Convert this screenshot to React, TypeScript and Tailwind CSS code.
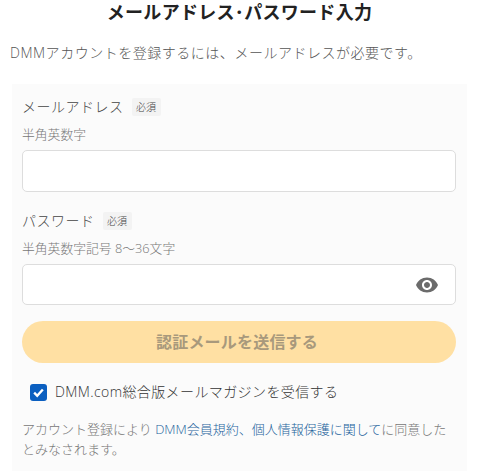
function Required() {
  return (
    <span className="ml-[8px] flex h-[18px] w-[29px] items-center justify-center rounded-[2px] bg-[#f3f3f3] text-[10px] font-light text-[#444]">
      必須
    </span>
  );
}

export default function App() {
  return (
    <div className="h-[471px] w-[497px] overflow-hidden bg-white font-['Open_Sans','Noto_Sans_CJK_JP',sans-serif]">
      <h1 className="h-[24px] pr-[18px] text-center text-[18px] leading-[24px] font-bold tracking-[0.3px] text-[#222]">
        メールアドレス･パスワード入力
      </h1>

      <p className="mt-[17px] pl-[10px] text-[14px] leading-[24px] font-light tracking-[0.52px] text-[#555]">
        DMMアカウントを登録するには、メールアドレスが必要です。
      </p>

      <div className="mx-[12px] mt-[19px] h-[387px] w-[455px] bg-[#fbfbfb] px-[10px] pt-[14px]">
        <div className="flex h-[18px] items-center">
          <span className="text-[14px] leading-[18px] font-light tracking-[0.5px] text-[#444]">メールアドレス</span>
          <Required />
        </div>
        <p className="mt-[10px] text-[12.8px] leading-[16px] font-light text-[#777]">半角英数字</p>
        <input className="mt-[8px] block h-[42px] w-[434px] rounded-[5px] border border-[#ddd] bg-white" />

        <div className="mt-[20px] flex h-[18px] items-center">
          <span className="text-[14px] leading-[18px] font-light tracking-[0.5px] text-[#444]">パスワード</span>
          <Required />
        </div>
        <p className="mt-[10px] text-[12.8px] leading-[16px] font-light text-[#777]">半角英数字記号 8〜36文字</p>
        <div className="relative mt-[8px] h-[41px] w-[434px]">
          <input className="block h-full w-full rounded-[5px] border border-[#ddd] bg-white" />
          <svg className="absolute top-[9px] right-[17px]" width="24" height="24" viewBox="0 0 24 24" fill="#6b6b6b">
            <path d="M12 4.5C7 4.5 2.73 7.61 1 12c1.73 4.39 6 7.5 11 7.5s9.27-3.11 11-7.5c-1.73-4.39-6-7.5-11-7.5zM12 17c-2.76 0-5-2.24-5-5s2.24-5 5-5 5 2.24 5 5-2.24 5-5 5zm0-8c-1.66 0-3 1.34-3 3s1.34 3 3 3 3-1.34 3-3-1.34-3-3-3z" />
          </svg>
        </div>

        <button className="mt-[16px] block h-[42px] w-[434px] rounded-full bg-[#ffe0a3] pr-[4px] text-[16px] font-bold tracking-[0.2px] text-[#a8997c]">
          認証メールを送信する
        </button>

        <label className="mt-[19px] flex h-[20px] items-center pl-[8px]">
          <span className="flex h-[17px] w-[17px] items-center justify-center rounded-[3px] bg-[#0b5fc0]">
            <svg width="13" height="13" viewBox="0 0 12 12" fill="none" stroke="white" strokeWidth="2.2">
              <path d="M2 6.2 4.8 9 10 3.2" />
            </svg>
          </span>
          <span className="ml-[8px] text-[14px] leading-[20px] font-light tracking-[0.4px] text-[#333]">DMM.com総合版メールマガジンを受信する</span>
        </label>

        <p className="mt-[17px] w-[425px] text-[13px] leading-[20px] font-light text-[#777]">
          アカウント登録により <span className="text-[#1d639c]">DMM会員規約、個人情報保護に関して</span>に同意したとみなされます。
        </p>
      </div>
    </div>
  );
}
